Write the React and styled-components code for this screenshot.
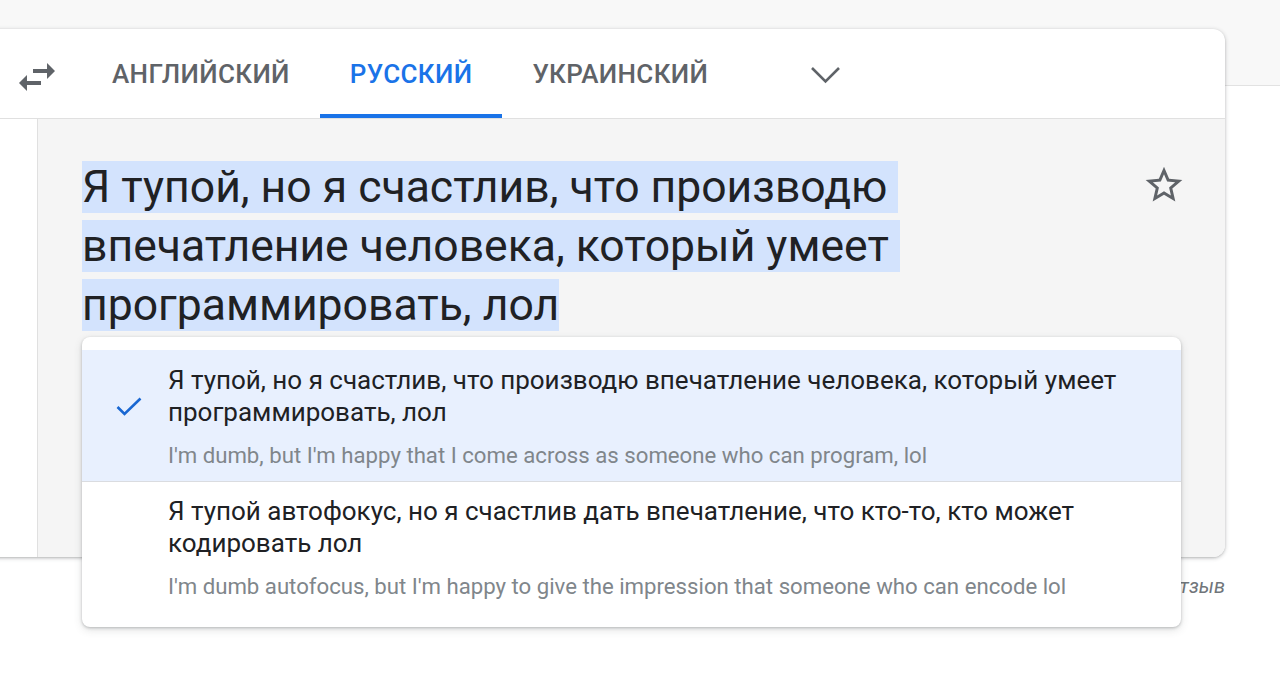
import React from "react";
import styled, {createGlobalStyle} from "styled-components";

const GlobalStyle = createGlobalStyle`
  html, body {
    margin: 0;
    padding: 0;
    background: #fff;
  }
  body {
    font-family: Roboto, "Noto Sans", "Liberation Sans", sans-serif;
    color: #202124;
  }
`;

const tabs = [
    {label: "Английский"},
    {label: "Русский", active: true},
    {label: "Украинский"},
];

// the result text wraps exactly like this in the reference
const resultLines = [
    "Я тупой, но я счастлив, что производю ",
    "впечатление человека, который умеет ",
    "программировать, лол",
];

const alternatives = [
    {
        text: "Я тупой, но я счастлив, что производю впечатление человека, который умеет программировать, лол",
        back: "I'm dumb, but I'm happy that I come across as someone who can program, lol",
        selected: true,
    },
    {
        text: "Я тупой автофокус, но я счастлив дать впечатление, что кто-то, кто может кодировать лол",
        back: "I'm dumb autofocus, but I'm happy to give the impression that someone who can encode lol",
    },
];

const SwapIcon = () => (
    <svg width="48" height="48" viewBox="0 0 24 24" fill="#5f6368">
        <path d="M6.99 11L3 15l3.99 4v-3H14v-2H6.99v-3zM21 9l-3.99-4v3H10v2h7.01v3L21 9z" />
    </svg>
);

const ChevronIcon = () => (
    <svg width="41" height="24" viewBox="0 0 41 24" fill="none">
        <polyline points="7,5 20.5,18.5 34,5" stroke="#5f6368" strokeWidth="2.6" />
    </svg>
);

const StarIcon = () => (
    <svg width="44" height="44" viewBox="0 0 24 24" fill="#5f6368">
        <path d="M22 9.24l-7.19-.62L12 2 9.19 8.63 2 9.24l5.46 4.73L5.82 21 12 17.27 18.18 21l-1.63-7.03L22 9.24zM12 15.4l-3.76 2.27 1-4.28-3.32-2.88 4.38-.38L12 6.1l1.71 4.04 4.38.38-3.32 2.88 1 4.28L12 15.4z" />
    </svg>
);

const CheckIcon = () => (
    <svg width="26" height="22" viewBox="0 0 26 22" fill="none">
        <polyline points="1.5,10 8.5,17 24.5,1.5" stroke="#1967d2" strokeWidth="2.6" />
    </svg>
);

export default function App() {
    return (
        <Page>
            <GlobalStyle />
            <Card>
                <Header>
                    <SwapButton>
                        <SwapIcon />
                    </SwapButton>
                    <TabList>
                        {tabs.map((tab) => (
                            <Tab key={tab.label} $active={tab.active}>
                                {tab.label}
                            </Tab>
                        ))}
                    </TabList>
                    <MoreButton>
                        <ChevronIcon />
                    </MoreButton>
                </Header>
                <Body>
                    <SourceSide />
                    <ResultPanel>
                        <ResultText>
                            {resultLines.map((line, index) => (
                                <ResultLine key={index}>
                                    <Selected>{line}</Selected>
                                </ResultLine>
                            ))}
                        </ResultText>
                        <StarButton>
                            <StarIcon />
                        </StarButton>
                        <Popup>
                            {alternatives.map((alt, index) => (
                                <Option key={index} $selected={alt.selected}>
                                    <CheckCell>{alt.selected && <CheckIcon />}</CheckCell>
                                    <OptionText>
                                        <Variant>{alt.text}</Variant>
                                        <BackTranslation>{alt.back}</BackTranslation>
                                    </OptionText>
                                </Option>
                            ))}
                        </Popup>
                    </ResultPanel>
                </Body>
            </Card>
            <Footer>
                <Feedback>Оставить отзыв</Feedback>
            </Footer>
        </Page>
    );
}

const Page = styled.div`
  width: 1280px;
  height: 695px;
  overflow: hidden;
  box-sizing: border-box;
  padding-top: 29px;
  background: linear-gradient(
    to bottom,
    #f8f8f8 0,
    #f8f8f8 85px,
    #e2e2e2 85px,
    #e2e2e2 86px,
    #fff 86px
  );
`;

const Card = styled.section`
  position: relative;
  z-index: 1;
  width: 1245px;
  margin-left: -20px;
  background: #fff;
  border-radius: 12px;
  box-shadow: 0 1px 4px rgba(60, 64, 67, 0.3), 0 1px 2px rgba(60, 64, 67, 0.15);
`;

const Header = styled.div`
  display: flex;
  align-items: stretch;
  height: 89px;
  padding-left: 20px;
  border-bottom: 1px solid #e0e0e0;
`;

const SwapButton = styled.div`
  width: 74px;
  display: flex;
  align-items: center;
  justify-content: center;
  padding-top: 6px;
`;

const TabList = styled.div`
  display: flex;
  margin-left: 8px;
`;

const Tab = styled.div`
  display: flex;
  align-items: center;
  box-sizing: border-box;
  padding: 4px 30px 0;
  font-size: 26px;
  font-weight: 500;
  letter-spacing: 0.35px;
  text-transform: uppercase;
  color: ${(p) => (p.$active ? "#1a73e8" : "#5f6368")};
  border-bottom: 4px solid ${(p) => (p.$active ? "#1a73e8" : "transparent")};
`;

const MoreButton = styled.div`
  display: flex;
  align-items: center;
  margin-left: 67px;
  padding-top: 2px;
`;

const Body = styled.div`
  display: flex;
  height: 438px;
`;

const SourceSide = styled.div`
  width: 57px;
  flex: none;
  background: #fff;
  border-right: 1px solid #e0e0e0;
  border-bottom-left-radius: 12px;
`;

const ResultPanel = styled.div`
  position: relative;
  flex: 1;
  display: flex;
  justify-content: space-between;
  align-items: flex-start;
  padding: 39px 39px 0 44px;
  background: #f5f5f5;
  border-bottom-right-radius: 12px;
`;

const ResultText = styled.div`
  font-size: 44.5px;
  line-height: 59px;
  color: #202124;
`;

const ResultLine = styled.div`
  white-space: pre;
`;

const Selected = styled.span`
  background: #d3e3fd;
`;

const StarButton = styled.div`
  display: flex;
  margin-top: 5px;
`;

const Popup = styled.div`
  position: absolute;
  z-index: 2;
  top: 218px;
  left: 44px;
  right: 44px;
  padding: 13px 0 12px;
  background: #fff;
  border-radius: 8px;
  box-shadow: 0 1px 3px rgba(60, 64, 67, 0.3), 0 3px 8px rgba(60, 64, 67, 0.15);
`;

const Option = styled.div`
  display: flex;
  padding: 14px 24px 11px 0;
  background: ${(p) => (p.$selected ? "#e8f0fe" : "#fff")};

  & + & {
    border-top: 1px solid #dadce0;
    padding-top: 13px;
    padding-bottom: 14px;
  }
`;

const CheckCell = styled.div`
  width: 86px;
  flex: none;
  box-sizing: border-box;
  padding: 33px 0 0 34px;
`;

const OptionText = styled.div`
  flex: 1;
`;

const Variant = styled.div`
  font-size: 26px;
  line-height: 32px;
  color: #202124;
`;

const BackTranslation = styled.div`
  margin-top: 12px;
  font-size: 22.2px;
  line-height: 30px;
  color: #80868b;
`;

const Footer = styled.div`
  display: flex;
  justify-content: flex-end;
  padding-right: 55px;
  margin-top: 17px;
`;

const Feedback = styled.span`
  font-size: 20px;
  line-height: 24px;
  font-style: italic;
  color: #70757a;
`;
